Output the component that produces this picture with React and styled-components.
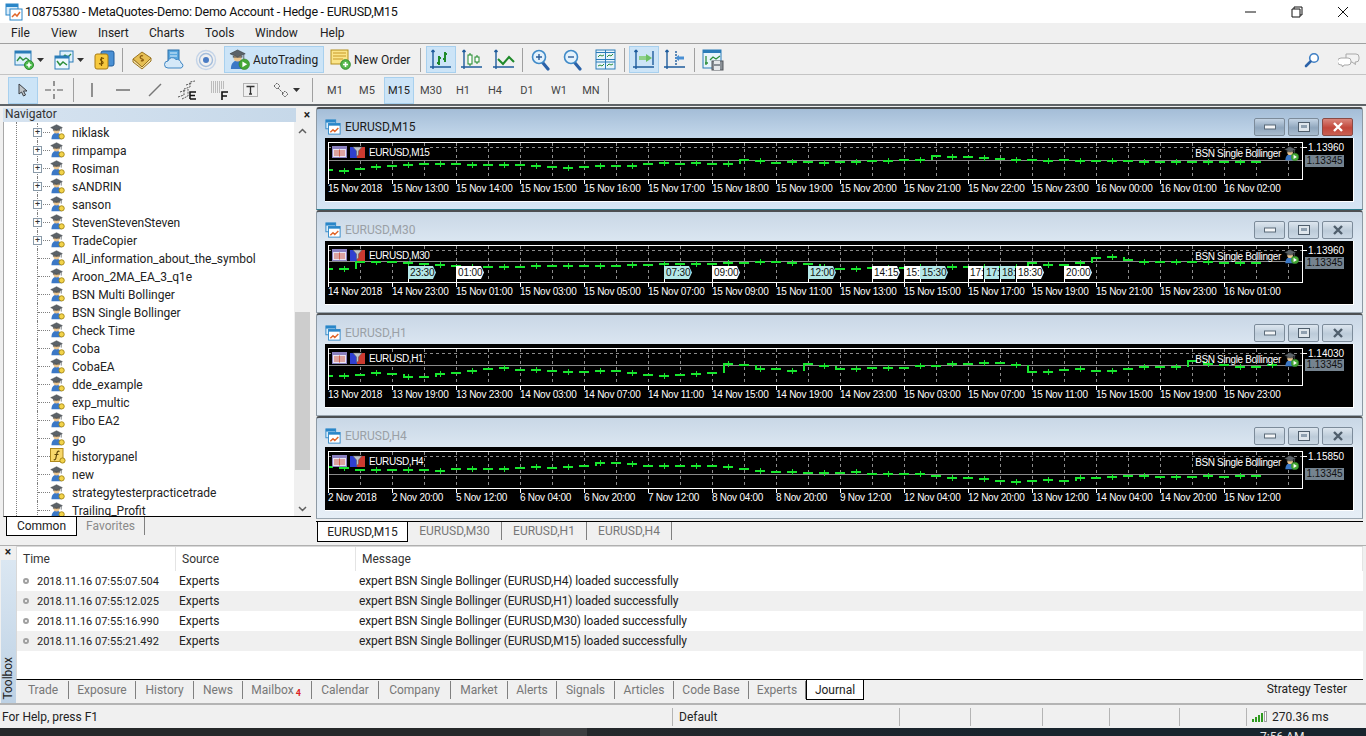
import React from 'react';
import styled, { createGlobalStyle } from 'styled-components';

const GlobalStyle = createGlobalStyle`
  html, body {
    margin: 0;
    padding: 0;
    background: #f0f0f0;
    overflow: hidden;
  }
  * {
    box-sizing: border-box;
  }
`;

const Shell = styled.div`
  width: 1366px;
  height: 736px;
  display: flex;
  flex-direction: column;
  overflow: hidden;
  background: #f0f0f0;
  color: #1a1a1a;
  font-family: Roboto, "Noto Sans", sans-serif;
  font-size: 12px;
`;

const TitleBar = styled.div`
  height: 23px;
  flex: none;
  background: #fff;
  display: flex;
  align-items: center;
  padding-left: 5px;
  font-size: 12.5px;
  letter-spacing: -0.25px;
  color: #111;
`;

const TitleText = styled.span`
  margin-left: 2px;
  flex: 1;
`;

const WinControl = styled.div`
  width: 46px;
  height: 23px;
  display: flex;
  align-items: center;
  justify-content: center;
`;

const MenuBar = styled.div`
  height: 21px;
  flex: none;
  display: flex;
  align-items: center;
  padding-left: 1px;
  border-bottom: 1px solid #a0a0a0;
`;

const MenuItem = styled.span`
  width: ${(p) => p.$w}px;
  padding-left: 10px;
  color: #222;
`;

const ToolRow = styled.div`
  height: 31px;
  flex: none;
  display: flex;
  align-items: center;
  position: relative;
  border-bottom: ${(p) => (p.$last ? '2px solid #5f6468' : '1px solid #c4c4c4')};
  padding: 1px 0 0 8px;
`;

const ToolBtn = styled.div`
  width: ${(p) => p.$w || 32}px;
  height: 27px;
  flex: none;
  display: flex;
  align-items: center;
  justify-content: ${(p) => (p.$pl ? 'flex-start' : 'center')};
  gap: 3px;
  padding-left: ${(p) => p.$pl || 0}px;
  margin-left: ${(p) => p.$ml || 0}px;
  background: ${(p) => (p.$on ? '#cce4f7' : 'transparent')};
  border: 1px solid ${(p) => (p.$on ? '#a8d0ee' : 'transparent')};
  white-space: nowrap;
  font-size: 12px;
  color: #222;
`;

const TimeBtn = styled(ToolBtn)`
  width: 32px;
  font-size: 11px;
  color: #444;
  ${(p) => p.$on && 'width: 30px; margin: 0 1px; color: #222;'}
`;

const Sep = styled.div`
  width: ${(p) => p.$w || 5}px;
  height: 24px;
  flex: none;
  display: flex;
  justify-content: center;
  &::before {
    content: '';
    width: 1px;
    background: #a0a0a0;
  }
`;

const Push = styled.div`
  flex: 1;
`;

const Workspace = styled.div`
  height: 439px;
  flex: none;
  display: flex;
`;

const NavPanel = styled.div`
  width: 316px;
  flex: none;
  display: flex;
  flex-direction: column;
  padding: 2px 2px 0 3px;
`;

const NavHeader = styled.div`
  height: 14px;
  flex: none;
  display: flex;
  align-items: center;
  justify-content: space-between;
  padding-right: 4px;
  color: #333;
`;

const NavHeaderLabel = styled.div`
  width: 293px;
  height: 14px;
  line-height: 12px;
  padding-left: 2px;
  background: linear-gradient(to right, #d6e3f0, #c6d8e9);
`;

const CloseMark = styled.span`
  font-size: 12px;
  font-weight: 700;
  line-height: 12px;
  color: #222;
`;

const TreeWrap = styled.div`
  height: 395px;
  flex: none;
  display: flex;
  background: #fff;
  border-left: 1px solid #a8a8a8;
  border-bottom: 1px solid #000;
  margin-right: 3px;
`;

const Tree = styled.div`
  flex: 1;
  min-width: 0;
  position: relative;
  overflow: hidden;
  padding-top: 1px;
  &::before {
    content: '';
    position: absolute;
    left: 12px;
    top: 0;
    bottom: 0;
    border-left: 1px dotted #808080;
  }
`;

const TreeRow = styled.div`
  height: 18px;
  display: flex;
  align-items: center;
  padding-left: 33px;
  white-space: nowrap;
  color: #222;
`;

const Stem = styled.div`
  width: 13px;
  height: 18px;
  flex: none;
  position: relative;
  &::before {
    content: '';
    position: absolute;
    left: 0;
    top: 0;
    bottom: 0;
    border-left: 1px dotted #808080;
  }
  &::after {
    content: '';
    position: absolute;
    left: 1px;
    right: 0;
    top: 9px;
    border-top: 1px dotted #808080;
  }
`;

const Expander = styled.div`
  position: absolute;
  z-index: 1;
  left: -4px;
  top: 5px;
  width: 9px;
  height: 9px;
  background: #fff;
  border: 1px solid #8a9aa8;
  display: flex;
  align-items: center;
  justify-content: center;
  font-size: 9px;
  line-height: 7px;
  color: #333;
`;

const RowLabel = styled.span`
  margin-left: 6px;
  padding-top: 1px;
`;

const ScrollBar = styled.div`
  width: 17px;
  flex: none;
  display: flex;
  flex-direction: column;
  background: #f0f0f0;
  align-items: center;
`;

const ScrollArrow = styled.div`
  height: 17px;
  flex: none;
  display: flex;
  align-items: center;
  justify-content: center;
`;

const ScrollGap = styled.div`
  height: ${(p) => p.$h}px;
  flex: none;
`;

const ScrollThumb = styled.div`
  width: 15px;
  height: 158px;
  flex: none;
  background: #cdcdcd;
`;

const NavTabs = styled.div`
  height: 20px;
  flex: none;
  display: flex;
  align-items: flex-start;
  padding-left: 3px;
`;

const NavTabActive = styled.div`
  width: 71px;
  height: 19px;
  background: #fff;
  border: 1px solid #000;
  border-top: none;
  display: flex;
  align-items: center;
  justify-content: center;
  color: #222;
`;

const NavTab = styled.div`
  width: 68px;
  height: 18px;
  display: flex;
  align-items: center;
  justify-content: center;
  border-right: 1px solid #808080;
  color: #8a8a8a;
`;

const ChartColumn = styled.div`
  flex: 1;
  min-width: 0;
  display: flex;
  flex-direction: column;
  padding: 1px 3px 0 0;
`;

const ChartWindow = styled.div`
  height: 103px;
  flex: none;
  display: flex;
  flex-direction: column;
  padding: 0 8px 0 8px;
  border: 1px solid #8d99a4;
  border-top: 2px solid #4c4f52;
  border-bottom: 1px solid ${(p) => (p.$active ? '#2e7c8c' : '#9aa6b0')};
  border-radius: 3px 3px 0 0;
  background: ${(p) =>
    p.$active
      ? 'linear-gradient(to bottom, #a4bdd7 0, #c5d9ec 30px, #d6e5f3 100%)'
      : 'linear-gradient(to bottom, #c9d7e6 0, #dbe6f1 30px, #e6eef6 100%)'};
`;

const ChartTitleRow = styled.div`
  height: 29px;
  flex: none;
  display: flex;
  align-items: center;
  padding-top: 6px;
`;

const ChartTitle = styled.span`
  margin-left: 4px;
  flex: 1;
  color: ${(p) => (p.$active ? '#1a1a1a' : '#9aa0a6')};
`;

const CaptionBtn = styled.div`
  width: 31px;
  height: 18px;
  margin-left: 3px;
  border-radius: 2px;
  border: 1px solid ${(p) => (p.$danger ? '#8a4a44' : '#7c8b9a')};
  display: flex;
  align-items: center;
  justify-content: center;
  background: ${(p) =>
    p.$danger
      ? 'linear-gradient(to bottom, #d9867c, #c2473b 55%, #c85f52)'
      : p.$active
      ? 'linear-gradient(to bottom, #c4d4e4, #8fa6bd 55%, #a8bccf)'
      : 'linear-gradient(to bottom, #dde6ef, #bccbd9 55%, #ccd9e5)'};
`;

const CaptionRow = styled.div`
  display: flex;
  margin-right: 1px;
`;

const ChartBody = styled.div`
  height: 64px;
  flex: none;
  background: #000;
  padding: 4px 0 0 3px;
  border-bottom: 1px solid #fff;
  border-right: 1px solid #fff;
  overflow: hidden;
`;

const PlotWrap = styled.div`
  position: relative;
  height: 38px;
  width: 1030px;
`;

const PlotSvg = styled.svg`
  display: block;
  overflow: visible;
`;

const AxisRow = styled.div`
  display: flex;
  height: 16px;
  align-items: center;
  color: #fff;
  font-family: "Liberation Sans", Arial, sans-serif;
  font-size: 10px;
  letter-spacing: -0.25px;
`;

const AxisCell = styled.div`
  width: 64px;
  flex: none;
  white-space: nowrap;
`;

const Legend = styled.div`
  position: absolute;
  left: 4px;
  top: 4px;
  display: flex;
  align-items: center;
  gap: 3px;
  color: #fff;
  font-family: "Liberation Sans", Arial, sans-serif;
  font-size: 10px;
  letter-spacing: -0.4px;
  background: #000;
  padding-right: 1px;
`;

const LegendName = styled.span`
  margin-left: 1px;
`;

const ExpertLabel = styled.div`
  position: absolute;
  right: 59px;
  top: 4px;
  display: flex;
  align-items: center;
  gap: 3px;
  color: #fff;
  font-family: "Liberation Sans", Arial, sans-serif;
  font-size: 10px;
  letter-spacing: -0.35px;
`;

const PriceTop = styled.div`
  position: absolute;
  left: 980px;
  top: 0;
  color: #fff;
  font-family: "Liberation Sans", Arial, sans-serif;
  font-size: 10px;
  line-height: 12px;
`;

const PriceNow = styled.div`
  position: absolute;
  left: 977px;
  top: ${(p) => p.$y - 6}px;
  width: 39px;
  height: 12px;
  line-height: 12px;
  text-align: center;
  background: #75838f;
  color: #111;
  font-family: "Liberation Sans", Arial, sans-serif;
  font-size: 10px;
`;

const TimeTag = styled.div`
  position: absolute;
  left: ${(p) => p.$x}px;
  top: 21px;
  width: ${(p) => p.$w}px;
  height: 13px;
  line-height: 13px;
  padding-left: 2px;
  overflow: hidden;
  white-space: nowrap;
  color: #111;
  font-family: "Liberation Sans", Arial, sans-serif;
  font-size: 10px;
  letter-spacing: -0.1px;
  background: ${(p) => (p.$cyan ? '#b4e8e8' : '#fff')};
  clip-path: ${(p) =>
    p.$cut ? 'none' : 'polygon(0 0, calc(100% - 3px) 0, 100% 50%, calc(100% - 3px) 100%, 0 100%)'};
`;

const DocTabs = styled.div`
  height: 23px;
  flex: none;
  margin-top: 2px;
  display: flex;
  align-items: flex-start;
  border-top: 1px solid #000;
  padding-left: 1px;
`;

const DocTabActive = styled.div`
  width: 91px;
  height: 20px;
  background: #fff;
  border: 1px solid #000;
  border-top: none;
  display: flex;
  align-items: center;
  justify-content: center;
  color: #222;
`;

const DocTab = styled.div`
  width: ${(p) => p.$w}px;
  height: 18px;
  display: flex;
  align-items: center;
  justify-content: center;
  border-right: 1px solid #808080;
  color: #777;
`;

const Toolbox = styled.div`
  height: 160px;
  flex: none;
  display: flex;
  border-top: 1px solid #b0b0b0;
  border-bottom: 2px solid #b4b4b4;
`;

const ToolboxStrip = styled.div`
  width: 16px;
  flex: none;
  display: flex;
  flex-direction: column;
  align-items: center;
`;

const StripHandle = styled.div`
  flex: 1;
  width: 15px;
  margin-top: 2px;
  background: linear-gradient(to bottom, #dbe7f2, #bdd1e4);
  display: flex;
  align-items: flex-end;
  justify-content: center;
  padding-bottom: 3px;
`;

const StripLabel = styled.span`
  writing-mode: vertical-rl;
  transform: rotate(180deg);
  color: #222;
`;

const ToolboxMain = styled.div`
  flex: 1;
  min-width: 0;
  display: flex;
  flex-direction: column;
`;

const LogArea = styled.div`
  height: 134px;
  flex: none;
  background: #fff;
  margin-right: 3px;
  border-bottom: 1px solid #000;
  border-left: 1px solid #d8d8d8;
  border-top: 1px solid #d8d8d8;
`;

const LogHead = styled.div`
  height: 24px;
  display: grid;
  grid-template-columns: 159px 180px 1fr;
  align-items: center;
  color: #333;
`;

const HeadCell = styled.div`
  height: 24px;
  line-height: 25px;
  padding-left: 6px;
  border-right: 1px solid #e4e4e4;
`;

const LogRow = styled.div`
  height: 20px;
  display: grid;
  grid-template-columns: 159px 180px 1fr;
  align-items: center;
  background: ${(p) => (p.$odd ? '#f0f0f0' : '#fff')};
  color: #222;
`;

const TimeCell = styled.div`
  display: flex;
  align-items: center;
  padding-left: 6px;
  gap: 8px;
  font-size: 11px;
`;

const Bullet = styled.span`
  width: 6px;
  height: 6px;
  border-radius: 50%;
  border: 2px solid #a0a0a0;
  background: #fff;
  flex: none;
`;

const SourceCell = styled.div`
  padding-left: 3px;
`;

const MessageCell = styled.div`
  padding-left: 3px;
  letter-spacing: -0.13px;
`;

const BoxTabs = styled.div`
  height: 23px;
  flex: none;
  display: flex;
  align-items: flex-start;
  padding-left: 2px;
`;

const BoxTab = styled.div`
  width: ${(p) => p.$w}px;
  height: 18px;
  margin-top: 1px;
  padding-right: ${(p) => p.$pr || 0}px;
  display: flex;
  align-items: center;
  justify-content: center;
  border-right: 1px solid #808080;
  color: #777;
  position: relative;
`;

const BoxTabActive = styled.div`
  width: 58px;
  height: 20px;
  background: #fff;
  border: 1px solid #000;
  border-top: none;
  display: flex;
  align-items: center;
  justify-content: center;
  color: #222;
`;

const MailCount = styled.span`
  position: absolute;
  right: 10px;
  top: 7px;
  color: #d22;
  font-size: 9px;
  font-weight: 700;
`;

const TesterTab = styled.div`
  margin-left: auto;
  margin-right: 19px;
  height: 18px;
  line-height: 18px;
  color: #222;
`;

const StatusBar = styled.div`
  height: 23px;
  flex: none;
  display: flex;
  align-items: center;
  padding-left: 2px;
  color: #222;
`;

const StatusCell = styled.div`
  width: ${(p) => p.$w}px;
  height: 18px;
  line-height: 18px;
  flex: none;
  display: flex;
  align-items: center;
  gap: 5px;
  padding-left: ${(p) => p.$pl || 0}px;
  border-left: ${(p) => (p.$line ? '1px solid #b4b4b4' : 'none')};
`;

const Taskbar = styled.div`
  height: 8px;
  flex: none;
  overflow: hidden;
  padding: 2px 0 0 1260px;
  color: #e8e8e8;
  line-height: 14px;
  background: linear-gradient(
    to right,
    #26282a 0,
    #26282a 540px,
    #3c3e40 540px,
    #3c3e40 587px,
    #25282b 587px,
    #18242d 1000px,
    #18242d 100%
  );
`;

// ---------- icons ----------

const Axes = ({ color = '#1f5c9c' }) => (
  <path d="M4 2v19M1 19h21M4 2l-1.500 2M4 2l1.500 2" fill="none" stroke={color} strokeWidth="1.400" />
);

const AppIcon = () => (
  <svg width="18" height="18" viewBox="0 0 18 18">
    <rect x="1" y="1" width="12" height="11" fill="#d8ecfa" stroke="#2a86c8" />
    <rect x="1" y="1" width="12" height="3" fill="#2a86c8" />
    <rect x="5" y="6" width="12" height="11" fill="#fff" stroke="#2a86c8" />
    <path d="M7 14l3-3 2 2 3-4" fill="none" stroke="#e0662a" strokeWidth="1.500" />
  </svg>
);

const ChartGlyph = ({ size = 16 }) => (
  <svg width={size} height={size} viewBox="0 0 18 18">
    <rect x="1" y="1" width="11" height="10" fill="#d8ecfa" stroke="#2a86c8" />
    <rect x="1" y="1" width="11" height="3" fill="#2a86c8" />
    <rect x="4" y="5" width="13" height="12" fill="#fff" stroke="#2a86c8" />
    <rect x="4" y="5" width="13" height="2.500" fill="#2a86c8" />
    <path d="M6 15l3-3 2 2 4-4" fill="none" stroke="#e0662a" strokeWidth="1.600" />
  </svg>
);

const NewChartIcon = () => (
  <svg width="20" height="20" viewBox="0 0 20 20">
    <rect x="1" y="1" width="16" height="14" fill="#dff0fb" stroke="#2a7cb8" />
    <rect x="1" y="1" width="16" height="2.500" fill="#2a7cb8" />
    <path d="M3 11l3-4 3 3 3-2 3 2" fill="none" stroke="#2d8f3c" strokeWidth="1.400" />
    <circle cx="15" cy="15" r="4.500" fill="#4cb84c" stroke="#2e8a2e" />
    <path d="M15 12.500v5M12.500 15h5" stroke="#fff" strokeWidth="1.600" />
  </svg>
);

const ProfilesIcon = () => (
  <svg width="20" height="20" viewBox="0 0 20 20">
    <rect x="6" y="1" width="13" height="11" fill="#dff0fb" stroke="#2a7cb8" />
    <path d="M8 8l3-3 3 2 3-3" fill="none" stroke="#2d8f3c" strokeWidth="1.300" />
    <rect x="1" y="6" width="14" height="13" fill="#eef8ff" stroke="#2a7cb8" />
    <rect x="1" y="6" width="14" height="2.500" fill="#2a7cb8" />
    <path d="M3 11l3 4 3-3 4 3" fill="none" stroke="#2d8f3c" strokeWidth="1.500" />
  </svg>
);

const MarketIcon = () => (
  <svg width="21" height="21" viewBox="0 0 21 21">
    <rect x="7" y="2" width="13" height="15" rx="2" fill="#4a90d4" stroke="#1f5c9c" />
    <rect x="1" y="5" width="13" height="15" rx="2" fill="#f7c93e" stroke="#a87b12" />
    <path d="M10 9.500c-3-1.500-4.500 1.500-2.500 2.500s2.500 2.500-.5 3c-.8 0-1.500-.3-2-.5M7.500 8v9" fill="none" stroke="#7a5200" strokeWidth="1.200" />
  </svg>
);

const BookIcon = () => (
  <svg width="22" height="20" viewBox="0 0 22 20">
    <path d="M2 9L11 2l9 6-9 9z" fill="#e6bf55" stroke="#9a7420" />
    <path d="M2 9v3l9 7 9-8V8l-9 9z" fill="#f5e1a5" stroke="#9a7420" />
    <path d="M12 6c-2-1-4 1-2 2.500l2 1c1 1-1 2-2 1" fill="none" stroke="#8a5a10" strokeWidth="1.300" />
  </svg>
);

const CloudIcon = () => (
  <svg width="21" height="21" viewBox="0 0 21 21">
    <rect x="4" y="1" width="11" height="13" fill="#5aa8e0" stroke="#2a6fa8" />
    <path d="M6 4h7M6 7h7M6 10h4" stroke="#dff0fb" strokeWidth="1" />
    <path d="M4 19a3.500 3.500 0 0 1 0-7 4.500 4.500 0 0 1 8-1.500 4 4 0 0 1 5 3.500 2.600 2.600 0 0 1 0 5z" fill="#d4e8f8" stroke="#3f86c4" />
  </svg>
);

const SignalIcon = () => (
  <svg width="22" height="22" viewBox="0 0 22 22" fill="none">
    <circle cx="11" cy="11" r="9.500" stroke="#c4d4e8" strokeWidth="1.400" />
    <circle cx="11" cy="11" r="6.500" stroke="#a4bddb" strokeWidth="1.400" />
    <circle cx="11" cy="11" r="3" fill="#4a7cc4" />
  </svg>
);

const TraderIcon = ({ size = 16, play }) => (
  <svg width={size} height={size} viewBox="0 0 22 22">
    <path d="M2 21c0-6 3-9 7-9s7 3 7 9z" fill="#3b78c6" />
    <circle cx="9" cy="9" r="4.200" fill="#eac48e" />
    <path d="M9 1L1 5l8 3.500L17 5z" fill="#5b6268" stroke="#33383c" strokeWidth=".6" />
    <path d="M4 7c1.500 1.500 8.500 1.500 10 0v2H4z" fill="#454b50" />
    <path d="M15.500 5.500v5" stroke="#5b6268" strokeWidth="1" />
    {play ? (
      <>
        <circle cx="16" cy="16" r="5.500" fill="#45a735" stroke="#2d7d22" strokeWidth=".6" />
        <path d="M14 13l5 3-5 3z" fill="#fff" />
      </>
    ) : (
      <circle cx="16" cy="17" r="3.600" fill="#f2d34a" stroke="#a88a18" strokeWidth="1.300" />
    )}
  </svg>
);

const ScriptIcon = () => (
  <svg width="16" height="16" viewBox="0 0 16 16">
    <rect x=".5" y=".5" width="12.500" height="13" fill="#f7d76a" stroke="#b08a1c" />
    <path d="M9.500 3.500C7.500 2.500 7 4.500 6.500 7l-.7 3.500c-.3 1.500-1.300 1.500-2 1M4.500 6.500h4" fill="none" stroke="#5e4608" strokeWidth="1.200" />
    <circle cx="12.500" cy="12.500" r="2.600" fill="#f2d34a" stroke="#a88a18" />
  </svg>
);

const OrderIcon = () => (
  <svg width="21" height="21" viewBox="0 0 21 21">
    <rect x="1" y="1" width="17" height="14" fill="#fbe58a" stroke="#b48f1e" />
    <path d="M3 4h13M3 7h13M3 10h10" stroke="#c89a28" strokeWidth="1.100" />
    <circle cx="15.500" cy="15.500" r="4.800" fill="#58b94e" stroke="#2f8a2a" />
    <path d="M15.500 13v5M13 15.500h5" stroke="#fff" strokeWidth="1.600" />
  </svg>
);

const DropArrow = () => (
  <svg width="7" height="4" viewBox="0 0 7 4">
    <path d="M0 0h7L3.500 4z" fill="#333" />
  </svg>
);

const BarsIcon = () => (
  <svg width="24" height="24" viewBox="0 0 24 24">
    <Axes />
    <path d="M10 8v9M8 15h2M10 10h2M16 4v10M14 11h2M16 6h2" fill="none" stroke="#1f8a2a" strokeWidth="2" />
  </svg>
);

const CandlesIcon = () => (
  <svg width="24" height="24" viewBox="0 0 24 24">
    <Axes />
    <path d="M10 5v13M17 7v9" stroke="#1f8a2a" />
    <rect x="8" y="7" width="4" height="9" fill="#fff" stroke="#1f8a2a" />
    <rect x="15" y="9" width="4" height="5" fill="#fff" stroke="#1f8a2a" />
  </svg>
);

const LineIcon = () => (
  <svg width="24" height="24" viewBox="0 0 24 24">
    <Axes />
    <path d="M6 11l5 5 6-7 5 5" fill="none" stroke="#1f8a2a" strokeWidth="2" />
  </svg>
);

const ZoomIcon = ({ plus }) => (
  <svg width="20" height="22" viewBox="0 0 20 22">
    <path d="M12 14l5 6" stroke="#2b62a8" strokeWidth="3.200" strokeLinecap="round" />
    <circle cx="8" cy="8" r="6.500" fill="#e4f2fc" stroke="#3f8ac8" strokeWidth="1.600" />
    <path d={plus ? 'M5 8h6M8 5v6' : 'M5 8h6'} stroke="#2b5c98" strokeWidth="1.400" />
  </svg>
);

const TileIcon = () => (
  <svg width="21" height="21" viewBox="0 0 21 21">
    <rect x="1" y="1" width="19" height="19" fill="#e8f4fb" stroke="#2a7cb8" />
    <path d="M1 3.500h19M1 10.500h19M1 13h19M10.500 1v19" stroke="#2a7cb8" />
    <path d="M3 8l2-2 2 1 2-1M12 8l2-2 2 1 2-2M3 17l2-1 2 1 2-2M12 17l2-2 2 1 2-1" fill="none" stroke="#2d8f3c" />
  </svg>
);

const AutoScrollIcon = () => (
  <svg width="24" height="24" viewBox="0 0 24 24">
    <Axes />
    <rect x="7" y="8" width="7" height="4" fill="#8fd08a" />
    <path d="M14 6l6 4-6 4z" fill="#6cc064" />
    <path d="M21 3v14" stroke="#1f5c9c" strokeWidth="1.400" />
  </svg>
);

const ShiftIcon = () => (
  <svg width="24" height="24" viewBox="0 0 24 24">
    <Axes />
    <path d="M13 3v15" stroke="#1f5c9c" strokeWidth="1.400" strokeDasharray="2 1" />
    <path d="M16 7l-4 3 4 3z" fill="#4a90d4" />
    <rect x="16" y="8.500" width="5" height="3" fill="#4a90d4" />
  </svg>
);

const TemplateIcon = () => (
  <svg width="22" height="22" viewBox="0 0 22 22">
    <rect x="1" y="1" width="18" height="18" fill="#e8f4fb" stroke="#2a7cb8" />
    <rect x="1" y="1" width="18" height="3" fill="#2a7cb8" />
    <path d="M4 7v9M3 14h3M8 11l3-3 3 2 4-3" fill="none" stroke="#2d8f3c" strokeWidth="1.300" />
    <rect x="10" y="12" width="11" height="9" fill="#8a9096" stroke="#55595e" />
    <rect x="12" y="12" width="6" height="3" fill="#e6e8ea" />
    <rect x="12" y="17" width="6" height="4" fill="#e6e8ea" />
  </svg>
);

const SearchIcon = () => (
  <svg width="16" height="16" viewBox="0 0 16 16">
    <circle cx="10" cy="6" r="4.300" fill="#fff" stroke="#3f7fc4" strokeWidth="1.600" />
    <path d="M6.500 9.500L2 14" stroke="#2b62a8" strokeWidth="2.600" strokeLinecap="round" />
  </svg>
);

const ChatIcon = () => (
  <svg width="22" height="16" viewBox="0 0 22 16">
    <path d="M8 2h10a3 3 0 0 1 3 3v2a3 3 0 0 1-3 3h-1l.5 2.500L14 10H8z" fill="#f2f2f2" stroke="#a8a8a8" />
    <path d="M3 6h7a3 3 0 0 1 3 3v1a3 3 0 0 1-3 3H6l-1.500 2L4 13H3a2.500 2.500 0 0 1 0-7z" fill="#fff" stroke="#a8a8a8" />
  </svg>
);

const CursorIcon = () => (
  <svg width="12" height="14" viewBox="0 0 12 14">
    <path d="M2 1v10l2.500-2 2 4 2-1-2-4H10z" fill="#bfc4c8" stroke="#3a3f44" />
  </svg>
);

const CrossIcon = () => (
  <svg width="20" height="20" viewBox="0 0 20 20">
    <path d="M10 1v5M10 14v5M1 10h6M13 10h6" stroke="#555" strokeWidth="1.200" />
    <path d="M9 10h2" stroke="#555" />
  </svg>
);

const VLineIcon = () => (
  <svg width="20" height="20" viewBox="0 0 20 20">
    <path d="M10 3v14" stroke="#666" strokeWidth="1.400" />
  </svg>
);

const HLineIcon = () => (
  <svg width="20" height="20" viewBox="0 0 20 20">
    <path d="M3 10h14" stroke="#666" strokeWidth="1.400" />
  </svg>
);

const TrendIcon = () => (
  <svg width="20" height="20" viewBox="0 0 20 20">
    <path d="M4 16L16 4" stroke="#777" strokeWidth="1.400" />
  </svg>
);

const FiboEIcon = () => (
  <svg width="22" height="22" viewBox="0 0 22 22">
    <path d="M2 18l6-2V10l6-2V3l5-1M4 13l6-2M6 20l6-3V10M10 6l6-2" fill="none" stroke="#555" strokeDasharray="2 1" />
    <path d="M14 20v-7h6M14 16.500h5M14 20h6" fill="none" stroke="#111" strokeWidth="1.500" />
  </svg>
);

const FiboFIcon = () => (
  <svg width="22" height="22" viewBox="0 0 22 22">
    <path d="M3 3h14M3 5h14M3 7h14M3 9h14M3 11h10M3 13h10" stroke="#888" strokeDasharray="1 1" />
    <path d="M14 21v-8h6M14 17h5" fill="none" stroke="#111" strokeWidth="1.600" />
  </svg>
);

const TextIcon = () => (
  <svg width="20" height="20" viewBox="0 0 20 20">
    <rect x="2.500" y="3.500" width="14" height="13" fill="none" stroke="#777" strokeDasharray="1 1" />
    <path d="M5.500 6.500h8M9.500 6.500v7.500M8 14h3" fill="none" stroke="#333" strokeWidth="1.300" />
  </svg>
);

const ArrowsIcon = () => (
  <svg width="18" height="18" viewBox="0 0 18 18">
    <path d="M2 5l3-3 3 3-3 3zM6 7l6 6M10 13l3-3 3 3-3 3z" fill="none" stroke="#666" strokeDasharray="2 .6" />
  </svg>
);

const TableGlyph = () => (
  <svg width="15" height="12" viewBox="0 0 15 12">
    <rect x=".5" y=".5" width="14" height="11" fill="#e8e4f4" stroke="#8a80c0" />
    <rect x="1" y="1" width="13" height="2" fill="#8a80c0" />
    <path d="M2 5h11M2 7h11M2 9h11M7.500 3.500v7" stroke="#d0604c" />
  </svg>
);

const SplitGlyph = () => (
  <svg width="15" height="12" viewBox="0 0 15 12">
    <rect x="0" y="1" width="8" height="11" fill="#2f3fd0" />
    <rect x="7" y="1" width="8" height="11" fill="#cc3a30" />
    <path d="M3 1h9L8.500 5v4L6.500 10.500V5z" fill="#c0c4c8" stroke="#555" strokeWidth=".5" />
  </svg>
);

const MinGlyph = () => (
  <svg width="12" height="6" viewBox="0 0 12 6">
    <rect x=".5" y="1" width="11" height="4" fill="#f4f6f8" stroke="#5b6a78" />
  </svg>
);

const RestoreGlyph = () => (
  <svg width="12" height="10" viewBox="0 0 12 10">
    <rect x=".5" y=".5" width="11" height="9" fill="#dfe6ec" stroke="#4f5e6c" />
    <rect x="3" y="3" width="6" height="3" fill="#8fa0b0" />
  </svg>
);

const CloseGlyph = ({ white }) => (
  <svg width="12" height="10" viewBox="0 0 12 10">
    <path d="M2 1l8 8M10 1L2 9" stroke={white ? '#fff' : '#4f5e6c'} strokeWidth="2.400" />
  </svg>
);

const SmallArrow = ({ down }) => (
  <svg width="9" height="6" viewBox="0 0 9 6">
    <path d={down ? 'M1 1l3.500 3.500L8 1' : 'M1 5l3.500-3.500L8 5'} fill="none" stroke="#606060" strokeWidth="1.500" />
  </svg>
);

const SignalBars = () => (
  <svg width="15" height="11" viewBox="0 0 15 11">
    <rect x="0" y="8" width="2" height="3" fill="#2f9a1f" />
    <rect x="3" y="6" width="2" height="5" fill="#2f9a1f" />
    <rect x="6" y="4" width="2" height="7" fill="#2f9a1f" />
    <rect x="9" y="2" width="2" height="9" fill="#2f9a1f" />
    <rect x="12.500" y=".5" width="2" height="10" fill="#fff" stroke="#a0a0a0" />
  </svg>
);

// ---------- chart data ----------

const GREEN = '#18e62e';

const CHARTS = [
  {
    name: 'EURUSD,M15',
    active: true,
    top: '1.13960',
    priceY: 19,
    lineY: 18,
    labels: ['15 Nov 2018', '15 Nov 13:00', '15 Nov 14:00', '15 Nov 15:00', '15 Nov 16:00', '15 Nov 17:00', '15 Nov 18:00', '15 Nov 19:00', '15 Nov 20:00', '15 Nov 21:00', '15 Nov 22:00', '15 Nov 23:00', '16 Nov 00:00', '16 Nov 01:00', '16 Nov 02:00'],
    bars: [28, 29, 27, 25, 24, 23, 22, 22, 22, 23, 23, 23, 23, 24, 25, 26, 25, 24, 24, 24, 22, 21, 22, 21, 22, 22, 18, 19, 21, 20, 20, 21, 20, 20, 19, 19, 18, 18, 14, 15, 15, 16, 17, 18, 18, 19, 18, 19, 19, 19, 19, 20, 20, 20, 20, 20, 20, 20, 20],
  },
  {
    name: 'EURUSD,M30',
    top: '1.13960',
    priceY: 18,
    lineY: 16,
    labels: ['14 Nov 2018', '14 Nov 23:00', '15 Nov 01:00', '15 Nov 03:00', '15 Nov 05:00', '15 Nov 07:00', '15 Nov 09:00', '15 Nov 11:00', '15 Nov 13:00', '15 Nov 15:00', '15 Nov 17:00', '15 Nov 19:00', '15 Nov 21:00', '15 Nov 23:00', '16 Nov 01:00'],
    bars: [24, 24, 17, 17, 17, 18, 19, 20, 21, 22, 22, 22, 22, 21, 21, 21, 21, 21, 21, 20, 20, 19, 19, 19, 19, 18, 18, 17, 17, 18, 19, 22, 24, 24, 23, 23, 23, 22, 22, 22, 22, 22, 22, 22, 18, 20, 20, 18, 13, 12, 15, 17, 17, 17, 17, 17, 18, 18, 18],
    tags: [
      { x: 80, t: '23:30', cyan: true },
      { x: 128, t: '01:00' },
      { x: 336, t: '07:30', cyan: true },
      { x: 384, t: '09:00' },
      { x: 480, t: '12:00', cyan: true },
      { x: 544, t: '14:15' },
      { x: 576, t: '15:', w: 16, cut: true },
      { x: 592, t: '15:30', cyan: true },
      { x: 640, t: '17:', w: 15, cut: true },
      { x: 656, t: '17:', w: 15, cut: true, cyan: true },
      { x: 672, t: '18:', w: 15, cut: true, cyan: true },
      { x: 688, t: '18:30' },
      { x: 736, t: '20:00' },
    ],
  },
  {
    name: 'EURUSD,H1',
    top: '1.14030',
    priceY: 17,
    lineY: 17,
    labels: ['13 Nov 2018', '13 Nov 19:00', '13 Nov 23:00', '14 Nov 03:00', '14 Nov 07:00', '14 Nov 11:00', '14 Nov 15:00', '14 Nov 19:00', '14 Nov 23:00', '15 Nov 03:00', '15 Nov 07:00', '15 Nov 11:00', '15 Nov 15:00', '15 Nov 19:00', '15 Nov 23:00'],
    bars: [28, 28, 27, 25, 26, 29, 29, 26, 25, 23, 21, 20, 22, 22, 23, 24, 24, 23, 23, 25, 27, 28, 27, 26, 25, 16, 17, 21, 21, 23, 16, 18, 21, 21, 20, 20, 20, 18, 18, 16, 16, 15, 15, 17, 24, 24, 22, 21, 23, 23, 21, 19, 19, 19, 13, 16, 17, 19, 19, 17],
  },
  {
    name: 'EURUSD,H4',
    top: '1.15850',
    priceY: 23,
    lineY: 23,
    labels: ['2 Nov 2018', '2 Nov 20:00', '5 Nov 12:00', '6 Nov 04:00', '6 Nov 20:00', '7 Nov 12:00', '8 Nov 04:00', '8 Nov 20:00', '9 Nov 12:00', '12 Nov 04:00', '12 Nov 20:00', '13 Nov 12:00', '14 Nov 04:00', '14 Nov 20:00', '15 Nov 12:00'],
    bars: [16, 17, 19, 19, 19, 19, 19, 20, 18, 18, 18, 18, 17, 16, 17, 16, 15, 12, 12, 13, 15, 15, 15, 15, 15, 16, 18, 20, 21, 21, 22, 22, 22, 21, 23, 23, 23, 23, 25, 27, 27, 28, 30, 31, 30, 29, 30, 27, 27, 26, 25, 25, 26, 26, 26, 25, 26, 25, 25],
  },
];

const GRID_X = Array.from({ length: 30 }, (_, i) => (i + 1) * 32);

const Plot = ({ chart }) => (
  <PlotSvg width="1030" height="38" viewBox="0 0 1030 38">
    {GRID_X.map((x) => (
      <path key={x} d={`M${x + 0.5} 1V37`} stroke="#8c8c8c" strokeDasharray="3 3" />
    ))}
    <path d="M0 5.500H975" stroke="#8c8c8c" strokeDasharray="3 3" />
    <path d={`M0 ${chart.lineY + 0.5}H975`} stroke="#8a8a8a" />
    {chart.bars.map((y, i) => {
      const x = i * 16;
      const prev = i ? chart.bars[i - 1] : y;
      return (
        <g key={i} stroke={GREEN}>
          <path d={`M${Math.max(x - 5, 0)} ${y}H${x + 5}`} strokeWidth="2" />
          {i > 0 && i % 2 === 1 && <path d={`M${x + 0.5} ${y - 3}V${y + 3}`} />}
          {Math.abs(prev - y) > 2 && <path d={`M${x - 4} ${prev}V${y}`} strokeWidth="2" />}
        </g>
      );
    })}
    <rect x="0.500" y="0.500" width="974" height="37" fill="none" stroke="#fff" />
    {chart.labels.map((_, i) => (
      <path key={i} d={`M${i * 64 + 0.5} 37V42`} stroke="#fff" />
    ))}
    {chart.tags &&
      chart.tags.map((tag) => (
        <path key={tag.x} d={`M${tag.x + 0.5} 33V38`} stroke="#fff" />
      ))}
    <path d="M975 5.500H979" stroke="#fff" />
  </PlotSvg>
);

const ChartPane = ({ chart }) => (
  <ChartWindow $active={chart.active}>
    <ChartTitleRow>
      <ChartGlyph />
      <ChartTitle $active={chart.active}>{chart.name}</ChartTitle>
      <CaptionRow>
        <CaptionBtn $active={chart.active}><MinGlyph /></CaptionBtn>
        <CaptionBtn $active={chart.active}><RestoreGlyph /></CaptionBtn>
        <CaptionBtn $active={chart.active} $danger={chart.active}><CloseGlyph white={chart.active} /></CaptionBtn>
      </CaptionRow>
    </ChartTitleRow>
    <ChartBody>
      <PlotWrap>
        <Plot chart={chart} />
        <Legend>
          <TableGlyph />
          <SplitGlyph />
          <LegendName>{chart.name}</LegendName>
        </Legend>
        <ExpertLabel>
          <span>BSN Single Bollinger</span>
          <TraderIcon size={15} play />
        </ExpertLabel>
        <PriceTop>{chart.top}</PriceTop>
        <PriceNow $y={chart.priceY}>1.13345</PriceNow>
        {chart.tags &&
          chart.tags.map((tag) => (
            <TimeTag key={tag.x} $x={tag.x} $w={tag.w || 28} $cyan={tag.cyan} $cut={tag.cut}>
              {tag.t}
            </TimeTag>
          ))}
      </PlotWrap>
      <AxisRow>
        {chart.labels.map((label) => (
          <AxisCell key={label}>{label}</AxisCell>
        ))}
      </AxisRow>
    </ChartBody>
  </ChartWindow>
);

// ---------- static lists ----------

const MENU = [['File', 40], ['View', 47], ['Insert', 51], ['Charts', 56], ['Tools', 50], ['Window', 65], ['Help', 50]];

const ROBOTS = [
  ['niklask', true], ['rimpampa', true], ['Rosiman', true], ['sANDRIN', true], ['sanson', true],
  ['StevenStevenSteven', true], ['TradeCopier', true], ['All_information_about_the_symbol'],
  ['Aroon_2MA_EA_3_q1e'], ['BSN Multi Bollinger'], ['BSN Single Bollinger'], ['Check Time'],
  ['Coba'], ['CobaEA'], ['dde_example'], ['exp_multic'], ['Fibo EA2'], ['go'],
  ['historypanel', false, true], ['new'], ['strategytesterpracticetrade'], ['Trailing_Profit'],
];

const TIMEFRAMES = ['M1', 'M5', 'M15', 'M30', 'H1', 'H4', 'D1', 'W1', 'MN'];

const LOG = [
  ['2018.11.16 07:55:07.504', 'expert BSN Single Bollinger (EURUSD,H4) loaded successfully'],
  ['2018.11.16 07:55:12.025', 'expert BSN Single Bollinger (EURUSD,H1) loaded successfully'],
  ['2018.11.16 07:55:16.990', 'expert BSN Single Bollinger (EURUSD,M30) loaded successfully'],
  ['2018.11.16 07:55:21.492', 'expert BSN Single Bollinger (EURUSD,M15) loaded successfully'],
];

const BOX_TABS = [
  ['Trade', 51], ['Exposure', 67], ['History', 58], ['News', 49], ['Mailbox', 69], ['Calendar', 67],
  ['Company', 72], ['Market', 57], ['Alerts', 49], ['Signals', 58], ['Articles', 59], ['Code Base', 75], ['Experts', 57],
];

export default function App() {
  return (
    <Shell>
      <GlobalStyle />
      <TitleBar>
        <AppIcon />
        <TitleText>10875380 - MetaQuotes-Demo: Demo Account - Hedge - EURUSD,M15</TitleText>
        <WinControl>
          <svg width="12" height="2" viewBox="0 0 12 2"><path d="M0 1h11" stroke="#111" /></svg>
        </WinControl>
        <WinControl>
          <svg width="12" height="12" viewBox="0 0 12 12">
            <path d="M3 3V1h8v8H9M1 3h8v8H1z" fill="none" stroke="#111" />
          </svg>
        </WinControl>
        <WinControl>
          <svg width="12" height="12" viewBox="0 0 12 12"><path d="M1 1l10 10M11 1L1 11" stroke="#111" /></svg>
        </WinControl>
      </TitleBar>

      <MenuBar>
        {MENU.map(([label, w]) => (
          <MenuItem key={label} $w={w}>{label}</MenuItem>
        ))}
      </MenuBar>

      <ToolRow>
        <ToolBtn $w={41}><NewChartIcon /><DropArrow /></ToolBtn>
        <ToolBtn $w={39}><ProfilesIcon /><DropArrow /></ToolBtn>
        <ToolBtn><MarketIcon /></ToolBtn>
        <Sep />
        <ToolBtn $w={33}><BookIcon /></ToolBtn>
        <ToolBtn><CloudIcon /></ToolBtn>
        <ToolBtn><SignalIcon /></ToolBtn>
        <ToolBtn $w={100} $ml={2} $pl={4} $on><TraderIcon size={21} play />AutoTrading</ToolBtn>
        <ToolBtn $w={92} $pl={5}><OrderIcon />New Order</ToolBtn>
        <Sep $w={8} />
        <ToolBtn $w={30} $ml={2} $on><BarsIcon /></ToolBtn>
        <ToolBtn><CandlesIcon /></ToolBtn>
        <ToolBtn><LineIcon /></ToolBtn>
        <Sep />
        <ToolBtn><ZoomIcon plus /></ToolBtn>
        <ToolBtn><ZoomIcon /></ToolBtn>
        <ToolBtn><TileIcon /></ToolBtn>
        <Sep $w={6} />
        <ToolBtn $w={30} $ml={2} $on><AutoScrollIcon /></ToolBtn>
        <ToolBtn $w={31}><ShiftIcon /></ToolBtn>
        <Sep $w={8} />
        <ToolBtn $w={30}><TemplateIcon /></ToolBtn>
        <Push />
        <ToolBtn $w={24}><SearchIcon /></ToolBtn>
        <ToolBtn $w={30} $ml={10}><ChatIcon /></ToolBtn>
        <ToolBtn $w={1} />
      </ToolRow>

      <ToolRow $last>
        <ToolBtn $w={30} $on><CursorIcon /></ToolBtn>
        <ToolBtn><CrossIcon /></ToolBtn>
        <Sep $w={6} />
        <ToolBtn $w={31}><VLineIcon /></ToolBtn>
        <ToolBtn><HLineIcon /></ToolBtn>
        <ToolBtn><TrendIcon /></ToolBtn>
        <ToolBtn><FiboEIcon /></ToolBtn>
        <ToolBtn><FiboFIcon /></ToolBtn>
        <ToolBtn><TextIcon /></ToolBtn>
        <ToolBtn $w={38}><ArrowsIcon /><DropArrow /></ToolBtn>
        <Sep $w={14} />
        {TIMEFRAMES.map((tf) => (
          <TimeBtn key={tf} $on={tf === 'M15'}>{tf}</TimeBtn>
        ))}
        <Sep $w={2} />
      </ToolRow>

      <Workspace>
        <NavPanel>
          <NavHeader>
            <NavHeaderLabel>Navigator</NavHeaderLabel>
            <CloseMark>×</CloseMark>
          </NavHeader>
          <TreeWrap>
            <Tree>
              {ROBOTS.map(([name, expandable, script]) => (
                <TreeRow key={name}>
                  <Stem>
                    {expandable && <Expander>+</Expander>}
                  </Stem>
                  {script ? <ScriptIcon /> : <TraderIcon />}
                  <RowLabel>{name}</RowLabel>
                </TreeRow>
              ))}
            </Tree>
            <ScrollBar>
              <ScrollArrow><SmallArrow /></ScrollArrow>
              <ScrollGap $h={173} />
              <ScrollThumb />
              <ScrollGap $h={30} />
              <ScrollArrow><SmallArrow down /></ScrollArrow>
            </ScrollBar>
          </TreeWrap>
          <NavTabs>
            <NavTabActive>Common</NavTabActive>
            <NavTab>Favorites</NavTab>
          </NavTabs>
        </NavPanel>

        <ChartColumn>
          {CHARTS.map((chart) => (
            <ChartPane key={chart.name} chart={chart} />
          ))}
          <DocTabs>
            <DocTabActive>EURUSD,M15</DocTabActive>
            <DocTab $w={94}>EURUSD,M30</DocTab>
            <DocTab $w={85}>EURUSD,H1</DocTab>
            <DocTab $w={85}>EURUSD,H4</DocTab>
          </DocTabs>
        </ChartColumn>
      </Workspace>

      <Toolbox>
        <ToolboxStrip>
          <CloseMark>×</CloseMark>
          <StripHandle>
            <StripLabel>Toolbox</StripLabel>
          </StripHandle>
        </ToolboxStrip>
        <ToolboxMain>
          <LogArea>
            <LogHead>
              <HeadCell>Time</HeadCell>
              <HeadCell>Source</HeadCell>
              <HeadCell>Message</HeadCell>
            </LogHead>
            {LOG.map(([time, message], i) => (
              <LogRow key={time} $odd={i % 2 === 1}>
                <TimeCell><Bullet />{time}</TimeCell>
                <SourceCell>Experts</SourceCell>
                <MessageCell>{message}</MessageCell>
              </LogRow>
            ))}
          </LogArea>
          <BoxTabs>
            {BOX_TABS.map(([label, w]) => (
              <BoxTab key={label} $w={w} $pr={label === 'Mailbox' ? 9 : 0}>
                {label}
                {label === 'Mailbox' && <MailCount>4</MailCount>}
              </BoxTab>
            ))}
            <BoxTabActive>Journal</BoxTabActive>
            <TesterTab>Strategy Tester</TesterTab>
          </BoxTabs>
        </ToolboxMain>
      </Toolbox>

      <StatusBar>
        <StatusCell $w={670}>For Help, press F1</StatusCell>
        <StatusCell $w={227} $line $pl={6}>Default</StatusCell>
        <StatusCell $w={71} $line />
        <StatusCell $w={72} $line />
        <StatusCell $w={67} $line />
        <StatusCell $w={70} $line />
        <StatusCell $w={67} $line />
        <StatusCell $w={120} $line $pl={5}><SignalBars />270.36 ms</StatusCell>
      </StatusBar>

      <Taskbar>7:56 AM</Taskbar>
    </Shell>
  );
}
